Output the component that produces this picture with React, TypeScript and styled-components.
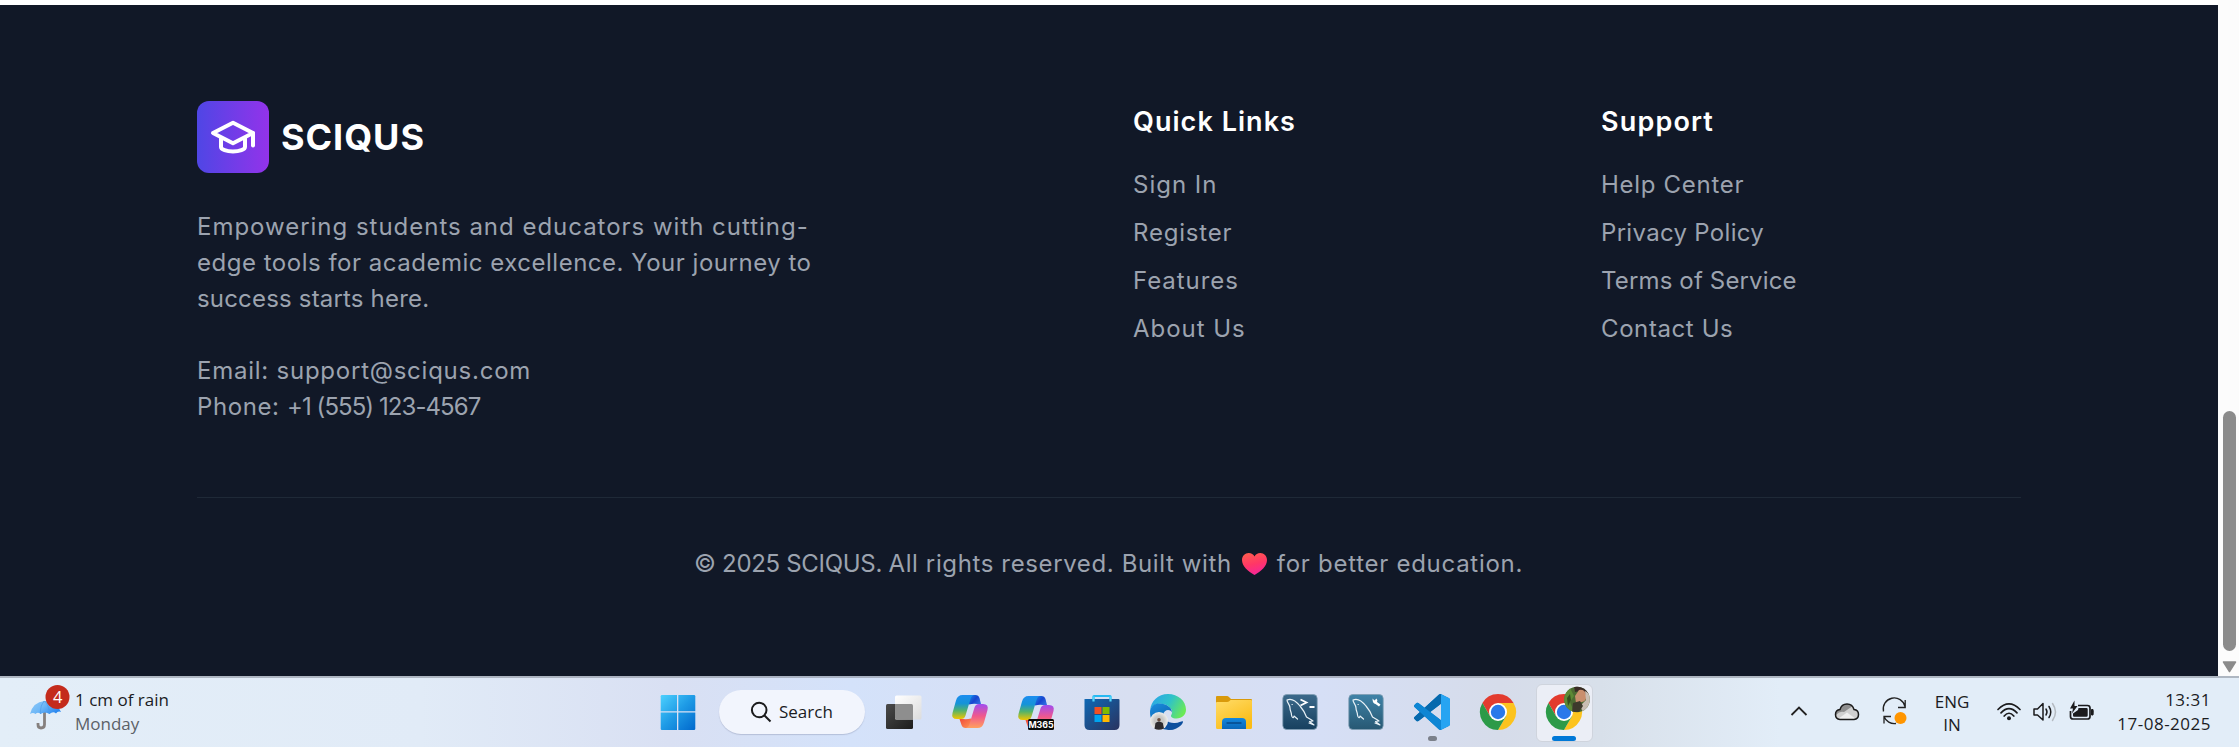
import React from 'react';
import styled, { createGlobalStyle } from 'styled-components';

const GlobalStyle = createGlobalStyle`
  * { box-sizing: border-box; }
  body { margin: 0; background: #fff; overflow: hidden; }
`;

const Screen = styled.div`
  width: 2239px;
  height: 747px;
  display: flex;
  flex-direction: column;
  overflow: hidden;
`;

const Viewport = styled.div`
  height: 676px;
  display: flex;
  overflow: hidden;
`;

const Page = styled.div`
  flex: 1;
  padding-top: 5px;
  background: #fff;
`;

const Footer = styled.footer`
  height: 678px;
  padding: 96px 0;
  background: #111827;
  color: #9ca3af;
  font-family: Inter, 'Open Sans', sans-serif;
  font-size: 24px;
  line-height: 36px;
`;

const Container = styled.div`
  width: 1920px;
  margin: 0 auto;
  padding: 0 48px;
`;

const Columns = styled.div`
  display: grid;
  grid-template-columns: 888px 420px 420px;
  column-gap: 48px;
  height: 324px;
`;

const Brand = styled.div`
  display: flex;
  align-items: center;
  gap: 12px;
  margin-bottom: 36px;
`;

const LogoTile = styled.div`
  width: 72px;
  height: 72px;
  border-radius: 12px;
  background: linear-gradient(to right, #4f46e5, #9333ea);
`;

const BrandName = styled.span`
  color: #fff;
  font-size: 36px;
  font-weight: 700;
  letter-spacing: 0.95px;
`;

const Line = styled.div<{ $track?: number }>`
  white-space: pre;
  letter-spacing: ${(p) => p.$track ?? 0}px;
`;

const Run = styled.span<{ $track: number }>`
  letter-spacing: ${(p) => p.$track}px;
`;

const Contact = styled.div`
  margin-top: 36px;
`;

const Heading = styled.h3<{ $track: number }>`
  margin: 0 0 24px;
  color: #fff;
  font-size: 27px;
  line-height: 42px;
  font-weight: 600;
  letter-spacing: ${(p) => p.$track}px;
`;

const LinkList = styled.ul`
  list-style: none;
  margin: 0;
  padding: 0;
  display: grid;
  row-gap: 12px;
`;

const Bottom = styled.div`
  margin-top: 72px;
  border-top: 1px solid #1f2937;
  padding: 48px 0 0 497px;
  display: flex;
`;

const Heart = styled.svg`
  width: 25px;
  height: 22px;
  margin: 7px 10px 0 10px;
`;

const ScrollTrack = styled.div`
  width: 21px;
  background: #fcfcfc;
  display: flex;
  flex-direction: column;
  justify-content: flex-end;
  align-items: center;
  padding: 0 2px 3px 4px;
`;

const ScrollThumb = styled.div`
  width: 13px;
  height: 240px;
  margin-bottom: 10px;
  border-radius: 7px;
  background: #8b8b8b;
`;

const Taskbar = styled.div`
  height: 71px;
  border-top: 2px solid rgba(140, 147, 158, 0.6);
  background: linear-gradient(
    to right,
    #e3eef8 0,
    #e1ebf7 420px,
    #d9e0f3 670px,
    #d4e2fa 850px,
    #d6e0f6 980px,
    #d8dff1 1130px,
    #d6dff6 1320px,
    #d6dcea 1500px,
    #d8e0ea 1600px,
    #e2edf8 1780px,
    #e2edf8 100%
  );
  display: grid;
  grid-template-columns: 644px 953px 1fr;
  color: #1b1c1f;
  font-family: 'Open Sans', 'Noto Sans', sans-serif;
  font-size: 17px;
  line-height: 24px;
`;

const Weather = styled.div`
  display: flex;
  padding: 6px 0 0 29px;
`;

const WeatherText = styled.div`
  padding: 4px 0 0 4px;
`;

const Muted = styled.div`
  color: #5c6167;
`;

const Apps = styled.div`
  display: flex;
  height: 69px;
`;

const AppCell = styled.div<{ $w?: number }>`
  width: ${(p) => p.$w ?? 66}px;
  display: flex;
  flex-direction: column;
  align-items: center;
  padding-top: 16px;
`;

const AppTile = styled.div`
  width: 57px;
  height: 58px;
  margin: -10px 0 0 0;
  padding-top: 9px;
  border: 1px solid #cfd4dd;
  border-radius: 6px;
  background: #ebeef6;
  display: flex;
  flex-direction: column;
  align-items: center;
`;

const AppIcon = styled.svg`
  width: 36px;
  height: 36px;
  flex: none;
  overflow: visible;
`;

const RunMark = styled.div<{ $active?: boolean }>`
  width: ${(p) => (p.$active ? 24 : 9)}px;
  height: 5px;
  margin-top: 6px;
  border-radius: 3px;
  background: ${(p) => (p.$active ? '#0078d7' : '#7b808a')};
`;

const SearchPill = styled.div`
  width: 146px;
  height: 44px;
  margin: 12px 6px 0 8px;
  padding-left: 31px;
  border-radius: 22px;
  background: #f2f5fd;
  box-shadow: 0 1px 1px rgba(120, 130, 160, 0.35);
  display: flex;
  align-items: center;
  gap: 7px;
`;

const Tray = styled.div`
  display: flex;
  padding: 0 28px 0 193px;
`;

const TrayIcon = styled.svg<{ $w: number; $left?: number }>`
  width: ${(p) => p.$w}px;
  height: 69px;
  margin-left: ${(p) => p.$left ?? 0}px;
  overflow: visible;
  flex: none;
`;

const Language = styled.div`
  width: 36px;
  margin-left: 27px;
  padding-top: 12px;
  text-align: center;
  line-height: 23px;
`;

const Clock = styled.div`
  margin-left: auto;
  padding-top: 10px;
  text-align: right;
  letter-spacing: 0.5px;
  white-space: nowrap;
`;

const quickLinks: [string, number][] = [
  ['Sign In', 1.0],
  ['Register', 0.8],
  ['Features', 0.95],
  ['About Us', 0.95],
];

const supportLinks: [string, number][] = [
  ['Help Center', 0.7],
  ['Privacy Policy', 0.31],
  ['Terms of Service', 0.15],
  ['Contact Us', 0.6],
];

function FooterLinks({ title, track, links }: { title: string; track: number; links: [string, number][] }) {
  return (
    <div>
      <Heading $track={track}>{title}</Heading>
      <LinkList>
        {links.map(([label, t]) => (
          <li key={label}>
            <Line $track={t}>{label}</Line>
          </li>
        ))}
      </LinkList>
    </div>
  );
}

const Start = () => (
  <AppIcon viewBox="0 0 36 36">
    <defs>
      <linearGradient id="win" x1="0" y1="0" x2="36" y2="36" gradientUnits="userSpaceOnUse">
        <stop offset="0" stopColor="#4fd3ff" />
        <stop offset="0.5" stopColor="#1e9be6" />
        <stop offset="1" stopColor="#0067cc" />
      </linearGradient>
    </defs>
    <g fill="url(#win)">
      <path d="M2 1H17V17.3H.7V2.3Q.7 1 2 1Z" />
      <path d="M18.3 1H34Q35.3 1 35.3 2.3V17.3H18.3Z" />
      <path d="M.7 18.6H17V36H2Q.7 36 .7 34.7Z" />
      <path d="M18.3 18.6H35.3V34.7Q35.3 36 34 36H18.3Z" />
    </g>
  </AppIcon>
);

const TaskView = () => (
  <AppIcon viewBox="0 0 36 36">
    <defs>
      <linearGradient id="tvd" x1="0" y1="0" x2="1" y2="1">
        <stop offset="0" stopColor="#4a4a4a" />
        <stop offset="1" stopColor="#1c1c1c" />
      </linearGradient>
      <linearGradient id="tvl" x1="0" y1="0" x2="1" y2="1">
        <stop offset="0" stopColor="#ffffff" />
        <stop offset="1" stopColor="#dcdcdc" />
      </linearGradient>
    </defs>
    <rect x="0" y="10" width="27" height="25" rx="1.5" fill="url(#tvd)" />
    <rect x="9" y="1.5" width="26.5" height="24" rx="1.5" fill="url(#tvl)" />
    <path d="M9 10H25.5Q27 10 27 11.5V25.5H10.5Q9 25.5 9 24Z" fill="#8e8e8e" />
  </AppIcon>
);

function CopilotArt({ id }: { id: string }) {
  return (
    <>
      <defs>
        <linearGradient id={`${id}a`} x1="0" y1="0" x2="0" y2="1">
          <stop offset="0" stopColor="#1c8df0" />
          <stop offset="0.35" stopColor="#1593d8" />
          <stop offset="0.65" stopColor="#53b36a" />
          <stop offset="1" stopColor="#f2c500" />
        </linearGradient>
        <linearGradient id={`${id}b`} x1="0" y1="0" x2="0" y2="1">
          <stop offset="0" stopColor="#a04cf0" />
          <stop offset="0.5" stopColor="#f0588c" />
          <stop offset="1" stopColor="#ffa05e" />
        </linearGradient>
        <linearGradient id={`${id}c`} x1="0" y1="0" x2="1" y2="0.6">
          <stop offset="0" stopColor="#1693ee" />
          <stop offset="0.6" stopColor="#1745cf" />
          <stop offset="1" stopColor="#2f6ae0" />
        </linearGradient>
        <linearGradient id={`${id}d`} x1="0" y1="0" x2="1" y2="1">
          <stop offset="0" stopColor="#f0483a" />
          <stop offset="1" stopColor="#ff9a55" />
        </linearGradient>
      </defs>
      <path d="M16 1H23.5Q26.5 1 27.5 4L29 10H25Q21 9.500 17 10.500Z" fill={`url(#${id}c)`} />
      <path d="M20 34H13.5Q10.500 34 9.500 31L7.500 25H11Q15 25.500 19 24.500Z" fill={`url(#${id}d)`} />
      <path d="M10.500 1H22Q19.500 1.500 18.500 5L13.500 21.500Q12.500 25 9 25H5Q-1 25 .5 19L4 6.500Q5.500 1 10.500 1Z" fill={`url(#${id}a)`} />
      <path d="M25.500 34H14Q16.500 33.500 17.500 30L22.500 13.500Q23.500 10 27 10H31Q37 10 35.500 16L32 28.500Q30.500 34 25.500 34Z" fill={`url(#${id}b)`} />
    </>
  );
}

const Copilot = () => (
  <AppIcon viewBox="0 0 36 36">
    <CopilotArt id="cp" />
  </AppIcon>
);

const M365 = () => (
  <AppIcon viewBox="0 0 36 36">
    <g transform="translate(0 1)">
      <CopilotArt id="cm" />
    </g>
    <rect x="10" y="25" width="26" height="11" rx="1.5" fill="#0a0a0a" />
    <text x="23" y="33.7" textAnchor="middle" fontFamily="Inter, sans-serif" fontWeight="700" fontSize="8.8" fill="#fff">M365</text>
  </AppIcon>
);

const Store = () => (
  <AppIcon viewBox="0 0 36 36">
    <defs>
      <linearGradient id="st" x1="0" y1="0" x2="1" y2="1">
        <stop offset="0" stopColor="#0f68b4" />
        <stop offset="1" stopColor="#2a335f" />
      </linearGradient>
    </defs>
    <path d="M9.5 8V2.5Q9.5 2 10 2H26Q26.5 2 26.5 2.5V8" fill="none" stroke="#27b9f2" strokeWidth="2.2" />
    <path d="M.5 5.5Q.5 5 1.5 5H34.5Q35.5 5 35.5 6V31Q35.5 36 30.5 36H5.5Q.5 36 .5 31Z" fill="url(#st)" />
    <path d="M9.5 7.5V2.5M26.5 7.5V2.5" stroke="#52d4fb" strokeWidth="2.2" />
    <rect x="10.5" y="13" width="7" height="7" fill="#f25022" />
    <rect x="18.5" y="13" width="7" height="7" fill="#7fba00" />
    <rect x="10.5" y="21" width="7" height="7" fill="#00a4ef" />
    <rect x="18.5" y="21" width="7" height="7" fill="#ffb900" />
  </AppIcon>
);

const Edge = () => (
  <AppIcon viewBox="0 0 36 36">
    <defs>
      <linearGradient id="eg" x1="0" y1="0.2" x2="1" y2="0.6">
        <stop offset="0" stopColor="#2aa5e8" />
        <stop offset="0.5" stopColor="#2fc2c9" />
        <stop offset="1" stopColor="#6bea55" />
      </linearGradient>
      <linearGradient id="eb" x1="0" y1="0" x2="0.5" y2="1">
        <stop offset="0" stopColor="#1a8fe0" />
        <stop offset="1" stopColor="#0b57a4" />
      </linearGradient>
      <radialGradient id="ep">
        <stop offset="0.5" stopColor="#c8c8c6" />
        <stop offset="1" stopColor="#eeeeec" />
      </radialGradient>
    </defs>
    <path d="M.2 16C1 7 8 0 18 0C28 0 36 7 36 15.5C36 21 32 24.5 26.5 24.5C22 24.5 20 22.8 21.5 20.5C23.8 16.5 20 12.5 15 10.5C8 8.5 2 11 .2 16Z" fill="url(#eg)" />
    <path d="M0 18C0 12 5 9.5 9.5 9.5C16 9.5 22.5 13.5 21.8 18.5C20 14.5 14 15.5 13 21C12 28 18 34 25 35C15 38 0 33 0 18Z" fill="url(#eb)" />
    <path d="M13.2 19C12 25 18 29.5 25 29C29 28.7 31.5 27 32.8 27.2C34.2 27.5 30 36 18.5 36C11 33 10 23 13.2 19Z" fill="#0d4f9e" />
    <circle cx="9" cy="27" r="9" fill="url(#ep)" />
    <circle cx="9" cy="25.7" r="1.8" fill="#6a4d3d" />
    <path d="M4.5 34.8L5.5 29Q7 27.5 9 27.5T12.8 29L14 34.5Q9 37 4.5 34.8Z" fill="#2e2b2d" />
  </AppIcon>
);

const Explorer = () => (
  <AppIcon viewBox="0 0 36 36">
    <defs>
      <linearGradient id="fo" x1="0" y1="0" x2="0.6" y2="1">
        <stop offset="0" stopColor="#ffdc69" />
        <stop offset="1" stopColor="#fbbc16" />
      </linearGradient>
      <linearGradient id="fb" x1="0" y1="0" x2="0" y2="1">
        <stop offset="0" stopColor="#1388de" />
        <stop offset="1" stopColor="#0a66b8" />
      </linearGradient>
    </defs>
    <path d="M0 3Q0 2 1 2H11Q12 2 13 3L15 5H35Q36 5 36 6V12H0Z" fill="#d99a0b" />
    <path d="M0 9Q0 8 1 8H11Q12.5 8 13.5 7L14.5 6H35Q36 6 36 7V33.5Q36 35 34.5 35H1.5Q0 35 0 33.5Z" fill="url(#fo)" />
    <path d="M6 35V28Q6 24 10 24H26Q30 24 30 28V35Z" fill="url(#fb)" />
    <path d="M11 29H25" stroke="#064a8a" strokeWidth="1.4" strokeLinecap="round" />
  </AppIcon>
);

function MySql({ variant }: { variant: 'shell' | 'bench' }) {
  const shell = variant === 'shell';
  return (
    <AppIcon viewBox="0 0 36 36">
      <defs>
        <linearGradient id={variant} x1="0" y1="0" x2="0" y2="1">
          <stop offset="0" stopColor={shell ? '#3c6a8b' : '#3f83a8'} />
          <stop offset="1" stopColor={shell ? '#17405f' : '#275873'} />
        </linearGradient>
      </defs>
      <rect x="0.8" y="0.5" width="34.4" height="35" rx="4" fill={`url(#${variant})`} stroke="#7f9db3" strokeWidth="0.8" />
      <g fill="none" stroke="#e9f2f7" strokeWidth="1.2" strokeLinecap="round" strokeLinejoin="round">
        <path d="M5 6C9 4 14 7 18 12C21 15.5 23 19 24.5 23C27 24.5 29 25.5 31 27L27.5 27.5L32 31L27 29M5 6C5 9 8 10.5 8 14C8 17 9.5 18 9.5 21C10 24 11.5 24.5 12 22L15.5 25M10 10.5H10.3" />
      </g>
      {shell ? (
        <path d="M18.5 5.5L24.5 8.5L18.5 11.5M27.5 13H32.5" fill="none" stroke="#fff" strokeWidth="1.8" />
      ) : (
        <path d="M24.5 4.5L26.5 6.5L28.5 4.5Q30 6 29 8L32.5 10.5L31 12.5L27.5 10Q24.500 9.500 24.5 4.5Z" fill="#fff" />
      )}
    </AppIcon>
  );
}

const VsCode = () => (
  <AppIcon viewBox="0 0 24 24">
    <path
      d="M23.15 2.587L18.21.21a1.494 1.494 0 0 0-1.705.29l-9.46 8.63-4.12-3.128a.999.999 0 0 0-1.276.057L.327 7.261A1 1 0 0 0 .326 8.74L3.899 12 .326 15.26a1 1 0 0 0 .001 1.479L1.65 17.94a.999.999 0 0 0 1.276.057l4.12-3.128 9.46 8.63a1.492 1.492 0 0 0 1.704.29l4.942-2.377A1.5 1.5 0 0 0 24 20.06V3.939a1.5 1.5 0 0 0-.85-1.352zm-5.146 14.861L10.826 12l7.178-5.448v10.896z"
      fill="#0a7fcb"
    />
    <path d="M7.045 9.13L16.5.5Q17.2-.1 18 .15V6.552L3.9 17.25L2.926 17.997Q2.3 18.4 1.65 17.94L.327 16.739A1 1 0 0 1 .326 15.26Z" fill="#0669ad" />
    <path d="M.327 7.261L1.65 6.06Q2.3 5.6 2.926 6.002L18 17.448V23.85Q17.2 24.1 16.5 23.5L.326 8.74Q-.3 8 .327 7.261Z" fill="#0e86d4" />
    <path d="M18 .13L23.15 2.587Q24 3 24 3.94V20.06Q24 21 23.15 21.41L18 23.87Z" fill="#27a4f2" />
  </AppIcon>
);

const ChromeArt = () => (
  <>
    <path d="M2.4 9A18 18 0 0 1 33.6 9H18V18L10.2 22.5Z" fill="#e33b2e" />
    <path d="M33.6 9A18 18 0 0 1 18 36L25.8 22.5L18 18V9Z" fill="#fcc31e" />
    <path d="M18 36A18 18 0 0 1 2.4 9L10.2 22.5L18 18L25.8 22.5Z" fill="#2c9a48" />
    <circle cx="18" cy="18" r="9" fill="#fff" />
    <circle cx="18" cy="18" r="7.2" fill="#2a78ea" />
  </>
);

const Chrome = () => (
  <AppIcon viewBox="0 0 36 36">
    <ChromeArt />
  </AppIcon>
);

const ChromeProfile = () => (
  <AppIcon viewBox="0 0 36 36">
    <defs>
      <clipPath id="avatar">
        <circle cx="31" cy="5.5" r="12.8" />
      </clipPath>
    </defs>
    <ChromeArt />
    <g clipPath="url(#avatar)">
      <rect x="18" y="-8" width="26" height="27" fill="#4c6b32" />
      <path d="M18-2L24-6L28 2L24 8L28 18H18Z" fill="#5c8a35" />
      <path d="M21 4L24 0L25 6L22 12Z" fill="#36501f" />
      <path d="M28-8H40L44-4L42 2L34-3L29-2Z" fill="#3a2b26" />
      <path d="M33-4Q39-5 40 1T36 8L30 9L29 2Z" fill="#c98f6d" />
      <path d="M39-3L44 0V14L37 18L34 12L40 6Z" fill="#c9beb3" />
      <path d="M27 9L34 7L37 12L33 18H26Z" fill="#3d3a2c" />
    </g>
  </AppIcon>
);

export default function App() {
  return (
    <Screen>
      <GlobalStyle />
      <Viewport>
        <Page>
          <Footer>
            <Container>
              <Columns>
                <div>
                  <Brand>
                    <LogoTile>
                      <svg width="72" height="72" viewBox="0 0 72 72" fill="none" stroke="#fff" strokeWidth="4" strokeLinejoin="round">
                        <path d="M16 32L36 21.8L56 32L36 42.2Z" />
                        <path d="M24 36V46C24 48.5 29.5 50.5 36 50.5S48 48.5 48 46V36" />
                        <path d="M56 32V44.5" strokeLinecap="round" />
                      </svg>
                    </LogoTile>
                    <BrandName>SCIQUS</BrandName>
                  </Brand>
                  <Line $track={0.98}>Empowering students and educators with cutting-</Line>
                  <Line $track={0.51}>edge tools for academic excellence. Your journey to</Line>
                  <Line $track={0.18}>success starts here.</Line>
                  <Contact>
                    <Line $track={0.76}>Email: support@sciqus.com</Line>
                    <Line>
                      <Run $track={0.6}>Phone: </Run>
                      <Run $track={-0.93}>+1 (555) 123-4567</Run>
                    </Line>
                  </Contact>
                </div>
                <FooterLinks title="Quick Links" track={1.05} links={quickLinks} />
                <FooterLinks title="Support" track={1.15} links={supportLinks} />
              </Columns>
              <Bottom>
                <Line>
                  <Run $track={-0.31}>© 2025 SCIQUS. </Run>
                  <Run $track={0.62}>All rights reserved. Built with</Run>
                </Line>
                <Heart viewBox="0 0 25 22">
                  <defs>
                    <linearGradient id="heart" x1="0.3" y1="0" x2="0.6" y2="1">
                      <stop offset="0" stopColor="#ff5a4f" />
                      <stop offset="0.5" stopColor="#ff3766" />
                      <stop offset="1" stopColor="#f5259b" />
                    </linearGradient>
                  </defs>
                  <path d="M12.5 22C6 18 0 13.5 0 7C0 3 3 0 6.700 0C9.3 0 11.5 1.4 12.5 3.5C13.5 1.4 15.7 0 18.3 0C22 0 25 3 25 7C25 13.5 19 18 12.5 22Z" fill="url(#heart)" />
                </Heart>
                <Line $track={0.72}>for better education.</Line>
              </Bottom>
            </Container>
          </Footer>
        </Page>
        <ScrollTrack>
          <ScrollThumb />
          <svg width="15" height="12" viewBox="0 0 15 12">
            <path d="M1.5 1H13.5L7.5 10.5Z" fill="#8b8b8b" stroke="#8b8b8b" strokeWidth="1.5" strokeLinejoin="round" />
          </svg>
        </ScrollTrack>
      </Viewport>

      <Taskbar>
        <Weather>
          <svg width="42" height="48" viewBox="0 0 42 48">
            <defs>
              <linearGradient id="umb" x1="0" y1="0" x2="1" y2="0.5">
                <stop offset="0" stopColor="#8fcaf8" />
                <stop offset="0.5" stopColor="#6fb8f7" />
                <stop offset="1" stopColor="#2d8af0" />
              </linearGradient>
            </defs>
            <path d="M15.5 17V40.5Q15.5 44 12 44Q9 44 9 40.5V39" fill="none" stroke="#85807e" strokeWidth="2.8" />
            <path d="M1 30Q4 18 15.5 17Q28 17 32 28Q29 26.5 27 29.5Q24 27 20.5 30Q16 27 11.5 30Q9 27.5 6.5 30Q4 28 1 30Z" fill="url(#umb)" />
            <path d="M11.5 30Q11 21 15.5 17Q20 21 20.5 30" fill="none" stroke="#4b9bea" strokeWidth="0.7" />
            <circle cx="28.5" cy="13" r="12" fill="#c42b1c" />
            <text x="28.8" y="18.5" textAnchor="middle" fontFamily="'Open Sans', sans-serif" fontSize="16.5" fill="#fff">4</text>
          </svg>
          <WeatherText>
            <div>1 cm of rain</div>
            <Muted>Monday</Muted>
          </WeatherText>
        </Weather>

        <Apps>
          <AppCell $w={67}><Start /></AppCell>
          <SearchPill>
            <svg width="22" height="22" viewBox="0 0 22 22" fill="none" stroke="#1b1b1d" strokeWidth="2">
              <circle cx="9.2" cy="9" r="7.3" />
              <path d="M14.5 14.5L20.5 20.5" />
            </svg>
            Search
          </SearchPill>
          <AppCell><TaskView /></AppCell>
          <AppCell><Copilot /></AppCell>
          <AppCell><M365 /></AppCell>
          <AppCell><Store /></AppCell>
          <AppCell><Edge /></AppCell>
          <AppCell><Explorer /></AppCell>
          <AppCell><MySql variant="shell" /></AppCell>
          <AppCell><MySql variant="bench" /></AppCell>
          <AppCell>
            <VsCode />
            <RunMark />
          </AppCell>
          <AppCell><Chrome /></AppCell>
          <AppCell>
            <AppTile>
              <ChromeProfile />
              <RunMark $active />
            </AppTile>
          </AppCell>
        </Apps>

        <Tray>
          <TrayIcon $w={18} viewBox="0 0 18 69">
            <path d="M1.5 37L9 29.5L16.5 37" fill="none" stroke="#222" strokeWidth="1.8" />
          </TrayIcon>
          <TrayIcon $w={26} $left={26} viewBox="0 0 26 69">
            <path d="M6 41.5Q1.5 41 1.5 36.5T6 31.5Q7.5 26 13 26T20 31.5Q24.5 32 24.5 36.5T20 41.5Z" fill="#d0d0d0" />
            <path d="M2 35.5Q2.5 31.5 6 31.5Q7.5 26 13 26Q16 26 18 28.5L10 34Q6 32.5 2 37Z" fill="#8e8e8e" />
            <path d="M4 41L13 34.5L22 41Z" fill="#efefef" />
            <path d="M6 41.5Q1.5 41 1.5 36.5T6 31.5Q7.5 26 13 26T20 31.5Q24.5 32 24.5 36.5T20 41.5Z" fill="none" stroke="#1a1a1a" strokeWidth="1.5" />
          </TrayIcon>
          <TrayIcon $w={25} $left={22} viewBox="0 0 25 69">
            <g fill="none" stroke="#222" strokeWidth="1.3">
              <path d="M1.5 33.5A11 11 0 0 1 23 28.5M23.2 22V29.5H16" />
              <path d="M14 45.5A11 11 0 0 1 2 38.5M2 45.5V38.5H9" />
            </g>
            <circle cx="18.5" cy="40" r="6" fill="#ff9500" />
          </TrayIcon>
          <Language>
            <div>ENG</div>
            <div>IN</div>
          </Language>
          <TrayIcon $w={24} $left={27} viewBox="0 0 24 69">
            <g fill="none" stroke="#1b1b1d" strokeWidth="1.7" strokeLinecap="round">
              <path d="M1 31.5Q12 20.5 23 31.5" />
              <path d="M4 34.8Q12 26.5 20 34.8" />
              <path d="M7.2 38Q12 32.5 16.8 38" />
            </g>
            <circle cx="12" cy="40.3" r="2" fill="#1b1b1d" />
          </TrayIcon>
          <TrayIcon $w={24} $left={12} viewBox="0 0 24 69">
            <g fill="none" stroke="#1b1b1d" strokeWidth="1.5" strokeLinejoin="round" strokeLinecap="round">
              <path d="M1 31H4.5L10 25.5V42L4.5 37H1Z" />
              <path d="M13 31Q15 34 13 37M16 28.5Q19.5 34 16 39.5" />
              <path d="M19.5 25.5Q25.5 34 19.5 42.5" stroke="#b5bbc2" />
            </g>
          </TrayIcon>
          <TrayIcon $w={25} $left={12} viewBox="0 0 25 69">
            <path d="M9 27.5H18.5Q21 27.5 21 30V38.5Q21 41 18.5 41H4Q1.5 41 1.5 38.5V33" fill="none" stroke="#1b1b1d" strokeWidth="1.7" />
            <path d="M9.5 30H17.5Q18.7 30 18.7 31.2V37.5Q18.7 38.7 17.5 38.7H5Q4 38.7 4 37.5V35.5L9 32Z" fill="#1b1b1d" />
            <path d="M5.5 22.5L1 30.5H4L3 35.5L8.5 28H5.5Z" fill="#1b1b1d" />
            <path d="M22.5 31.5H24Q24.5 34.2 24 37H22.5Z" fill="#1b1b1d" stroke="#1b1b1d" />
          </TrayIcon>
          <Clock>
            <div>13:31</div>
            <div>17-08-2025</div>
          </Clock>
        </Tray>
      </Taskbar>
    </Screen>
  );
}
